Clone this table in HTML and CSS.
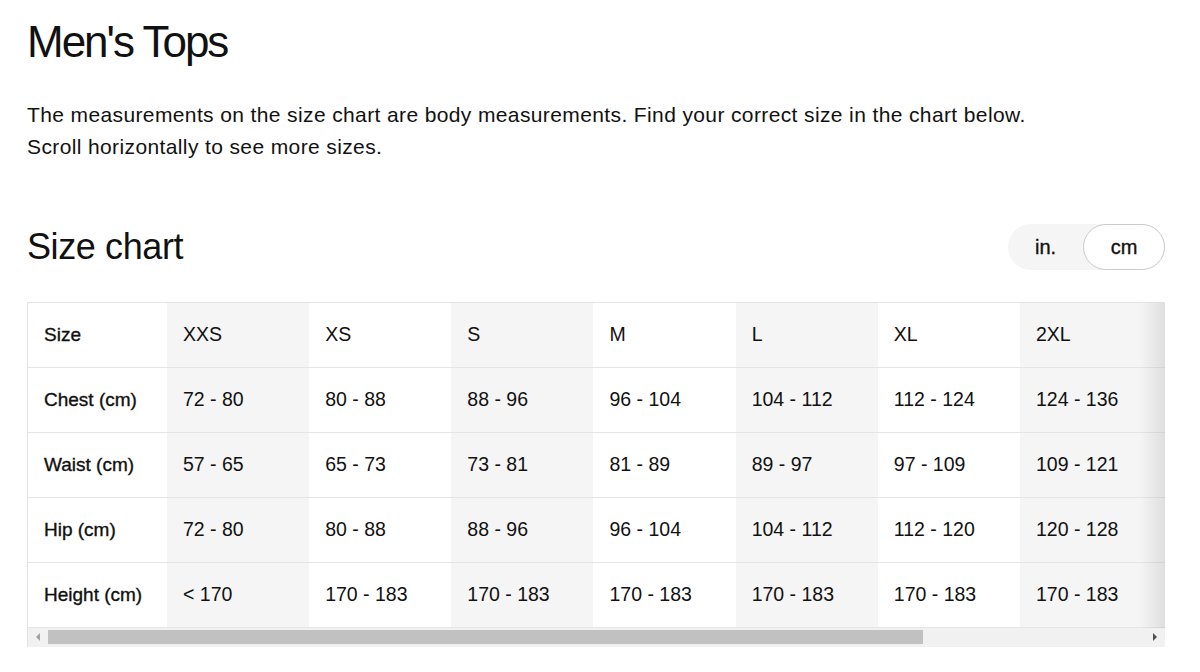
FILE: index.html
```html
<!DOCTYPE html>
<html lang="en">
<head>
<meta charset="utf-8">
<title>Men's Tops</title>
<link rel="stylesheet" href="styles.css">
</head>
<body>
<main class="page">
  <h1 class="title">Men's Tops</h1>
  <p class="intro">The measurements on the size chart are body measurements. Find your correct size in the chart below.<br>Scroll horizontally to see more sizes.</p>

  <div class="chart-head">
    <h2 class="chart-title">Size chart</h2>
    <div class="toggle">
      <span class="toggle-opt">in.</span>
      <span class="toggle-opt active">cm</span>
    </div>
  </div>

  <div class="table-wrap">
    <div class="table-scroll">
      <table class="size-table">
        <colgroup>
          <col class="label-col"><col class="shade"><col><col class="shade"><col><col class="shade"><col><col class="shade rest">
        </colgroup>
        <tr><th>Size</th><td>XXS</td><td>XS</td><td>S</td><td>M</td><td>L</td><td>XL</td><td>2XL</td></tr>
        <tr><th>Chest (cm)</th><td>72 - 80</td><td>80 - 88</td><td>88 - 96</td><td>96 - 104</td><td>104 - 112</td><td>112 - 124</td><td>124 - 136</td></tr>
        <tr><th>Waist (cm)</th><td>57 - 65</td><td>65 - 73</td><td>73 - 81</td><td>81 - 89</td><td>89 - 97</td><td>97 - 109</td><td>109 - 121</td></tr>
        <tr><th>Hip (cm)</th><td>72 - 80</td><td>80 - 88</td><td>88 - 96</td><td>96 - 104</td><td>104 - 112</td><td>112 - 120</td><td>120 - 128</td></tr>
        <tr><th>Height (cm)</th><td>&lt; 170</td><td>170 - 183</td><td>170 - 183</td><td>170 - 183</td><td>170 - 183</td><td>170 - 183</td><td>170 - 183</td></tr>
      </table>
    </div>
    <div class="scrollbar">
      <span class="sb-btn"><span class="arrow-left"></span></span>
      <span class="sb-thumb"></span>
      <span class="sb-track"></span>
      <span class="sb-btn"><span class="arrow-right"></span></span>
    </div>
    <div class="edge-shadow"></div>
  </div>
</main>
</body>
</html>
```

FILE: styles.css
```css
* { box-sizing: border-box; }

html, body {
  margin: 0;
  padding: 0;
  background: #ffffff;
}

body {
  font-family: "Liberation Sans", Arial, sans-serif;
  color: #111111;
}

.page {
  width: 1165px;
  padding: 17px 0 0 27px;
}

.title {
  margin: 0;
  font-size: 44px;
  line-height: 50px;
  font-weight: 400;
  letter-spacing: -2px;
}

.intro {
  margin: 32px 0 0;
  font-size: 21px;
  line-height: 32px;
  letter-spacing: 0.38px;
}

.chart-head {
  margin-top: 61px;
  display: flex;
  align-items: center;
  justify-content: space-between;
}

.chart-title {
  margin: 0;
  font-size: 36px;
  line-height: 46px;
  font-weight: 400;
  letter-spacing: -0.4px;
}

.toggle {
  display: flex;
  height: 46px;
  background: #f5f5f5;
  border-radius: 23px;
}

.toggle-opt {
  display: flex;
  align-items: center;
  justify-content: center;
  height: 46px;
  font-size: 20px;
  -webkit-text-stroke: 0.35px #111;
}

.toggle-opt:first-child {
  width: 75px;
}

.toggle-opt.active {
  width: 82px;
  background: #ffffff;
  border: 1px solid #cacaca;
  border-radius: 23px;
}

.table-wrap {
  position: relative;
  margin-top: 32px;
  width: 1138px;
  border-top: 1px solid #e3e3e3;
  border-left: 1px solid #e3e3e3;
}

.table-scroll {
  overflow: hidden;
}

.size-table {
  border-collapse: collapse;
  table-layout: fixed;
  width: 1137px;
  font-size: 19.5px;
}

.size-table col {
  width: 142.17px;
}

.size-table col.label-col {
  width: 139px;
}

.size-table col.rest {
  width: auto;
}

.size-table col.shade {
  background: #f5f5f5;
}

.size-table th,
.size-table td {
  height: 65px;
  padding: 0 0 0 16px;
  text-align: left;
  vertical-align: middle;
  border-bottom: 1px solid #e5e5e5;
  white-space: nowrap;
}

.size-table th {
  font-size: 19px;
  font-weight: 400;
  -webkit-text-stroke: 0.35px #111;
}

.size-table tr:first-child th,
.size-table tr:first-child td {
  height: 64px;
}

.scrollbar {
  display: flex;
  height: 19px;
  background: #f1f1f1;
}

.sb-btn {
  width: 20px;
  display: flex;
  align-items: center;
  justify-content: center;
}

.arrow-left {
  width: 0;
  height: 0;
  border-top: 4px solid transparent;
  border-bottom: 4px solid transparent;
  border-right: 4px solid #a3a3a3;
}

.arrow-right {
  width: 0;
  height: 0;
  border-top: 4px solid transparent;
  border-bottom: 4px solid transparent;
  border-left: 4px solid #505050;
}

.sb-thumb {
  width: 875px;
  margin: 2px 0 3px;
  background: #c1c1c1;
}

.sb-track {
  flex: 1;
}

.edge-shadow {
  position: absolute;
  top: 0;
  right: 0;
  bottom: 19px;
  width: 26px;
  background: linear-gradient(to right, rgba(0,0,0,0), rgba(0,0,0,0.09));
  pointer-events: none;
}
```
